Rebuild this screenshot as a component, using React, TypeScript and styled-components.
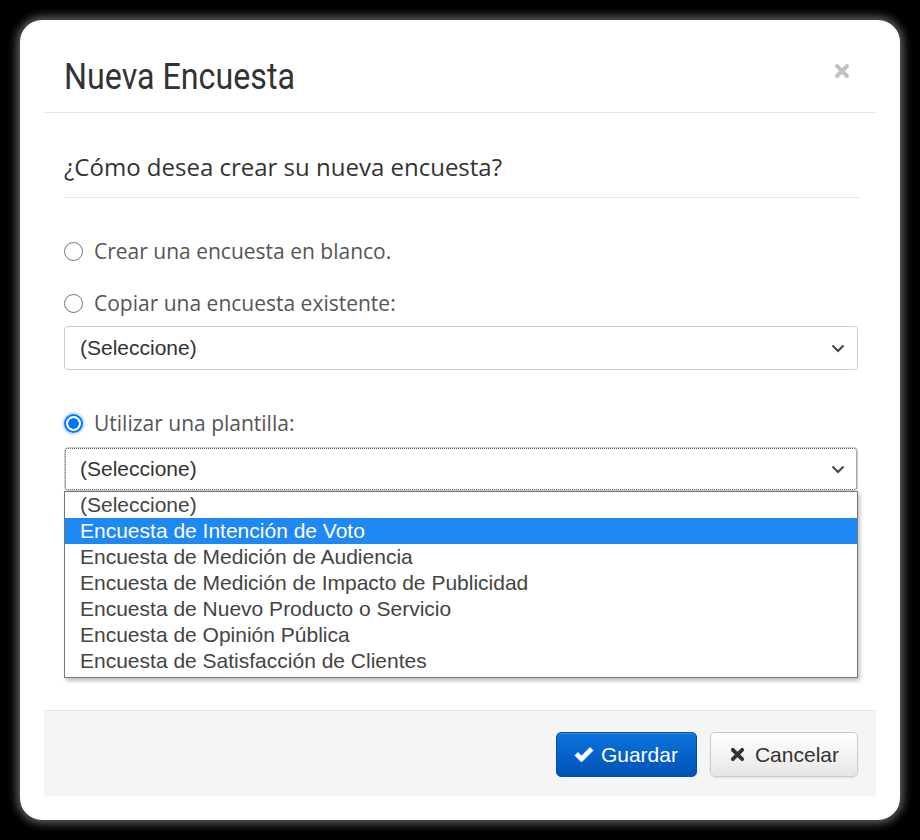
import React from "react";
import styled, { createGlobalStyle } from "styled-components";

const GlobalStyle = createGlobalStyle`
    html, body {
        margin: 0;
        padding: 0;
        background: #000000;
    }
    * {
        box-sizing: border-box;
    }
`;

const Page = styled.div`
    width: 920px;
    height: 840px;
    padding: 20px;
    background: #000000;
`;

const Card = styled.div`
    width: 880px;
    height: 800px;
    background: #ffffff;
    border-radius: 22px;
    box-shadow: 0 0 10px 3px rgba(120, 120, 120, 0.85);
    padding: 0 24px 24px;
    display: flex;
    flex-direction: column;
`;

const Header = styled.div`
    display: flex;
    justify-content: space-between;
    align-items: flex-start;
    height: 93px;
    padding: 37px 26px 0 20px;
    border-bottom: 1px solid #e5e5e5;
`;

const Title = styled.h4`
    margin: 0;
    font-family: Roboto, "Liberation Sans", sans-serif;
    font-weight: 400;
    font-size: 36px;
    line-height: 40px;
    color: #333333;
    transform: scaleX(0.895);
    transform-origin: left center;
`;

const Close = styled.button`
    border: 0;
    background: none;
    padding: 0;
    margin-top: 6px;
    cursor: pointer;
    display: flex;
`;

const Body = styled.div`
    flex: 1;
    padding: 39px 18px 0 20px;
    display: flex;
    flex-direction: column;
`;

const Question = styled.div`
    font-family: "Open Sans", sans-serif;
    font-size: 24px;
    line-height: 30px;
    color: #333333;
    padding-bottom: 15px;
    border-bottom: 1px solid #e5e5e5;
    margin-right: -2px;
`;

const RadioRow = styled.label<{ $gap: number }>`
    display: flex;
    align-items: center;
    gap: 11px;
    height: 28px;
    margin-top: ${(p) => p.$gap}px;
    font-family: "Open Sans", sans-serif;
    font-size: 21px;
    color: #555555;
    cursor: pointer;
`;

const RadioDot = styled.span<{ $checked?: boolean }>`
    width: 19px;
    height: 19px;
    border-radius: 50%;
    flex-shrink: 0;
    border: ${(p) => (p.$checked ? "2px solid #0075ff" : "1px solid #767676")};
    background: ${(p) =>
        p.$checked
            ? "radial-gradient(circle, #0075ff 0 5px, #ffffff 5.5px)"
            : "#ffffff"};
    box-shadow: ${(p) => (p.$checked ? "0 0 0 2px rgba(0, 117, 255, 0.18)" : "none")};
`;

const SelectWrap = styled.div<{ $gap: number }>`
    position: relative;
    margin-top: ${(p) => p.$gap}px;
`;

const SelectBox = styled.div<{ $focused?: boolean }>`
    height: 44px;
    display: flex;
    align-items: center;
    justify-content: space-between;
    padding: 0 12px 0 15px;
    border: 1px solid #cccccc;
    border-radius: 4px;
    outline: ${(p) => (p.$focused ? "1px dotted #555555" : "none")};
    outline-offset: -2px;
    font-family: "Liberation Sans", Arial, sans-serif;
    font-size: 21px;
    color: #333333;
    background: #ffffff;
`;

const OptionList = styled.ul`
    position: absolute;
    top: 100%;
    left: 0;
    right: 0;
    margin: 0;
    padding: 0 0 3px;
    list-style: none;
    background: #ffffff;
    border: 1px solid #767676;
    box-shadow: 2px 3px 4px rgba(0, 0, 0, 0.25);
    z-index: 2;
`;

const Option = styled.li<{ $active?: boolean }>`
    height: 26px;
    line-height: 26px;
    padding-left: 15px;
    font-family: "Liberation Sans", Arial, sans-serif;
    font-size: 21px;
    color: ${(p) => (p.$active ? "#ffffff" : "#444444")};
    background: ${(p) => (p.$active ? "#1e88f5" : "transparent")};
    white-space: nowrap;
`;

const Footer = styled.div`
    height: 86px;
    background: #f5f5f5;
    border-top: 1px solid #e5e5e5;
    display: flex;
    justify-content: flex-end;
    align-items: flex-start;
    gap: 13px;
    padding: 21px 18px 0 0;
`;

const Button = styled.button<{ $primary?: boolean }>`
    height: 45px;
    display: flex;
    align-items: center;
    gap: ${(p) => (p.$primary ? 7 : 10)}px;
    padding: ${(p) => (p.$primary ? "0 18px 0 17px" : "0 18px 0 19px")};
    border-radius: 5px;
    font-family: "Liberation Sans", Arial, sans-serif;
    font-size: 21px;
    cursor: pointer;
    color: ${(p) => (p.$primary ? "#ffffff" : "#333333")};
    border: 1px solid ${(p) => (p.$primary ? "#0051ad" : "#cccccc")};
    background: ${(p) =>
        p.$primary
            ? "linear-gradient(#0b74dd, #0052b6)"
            : "linear-gradient(#ffffff, #e6e6e6)"};
    box-shadow: ${(p) =>
        p.$primary
            ? "inset 0 1px 0 rgba(255,255,255,0.15)"
            : "0 1px 2px rgba(0,0,0,0.08)"};
`;

const Chevron = () => (
    <svg width="14" height="9" viewBox="0 0 14 9">
        <path d="M1.5 1.5 L7 7 L12.5 1.5" fill="none" stroke="#444" strokeWidth="2" />
    </svg>
);

const CheckIcon = () => (
    <svg width="20" height="17" viewBox="0 0 20 17">
        <path
            d="M1 9.5 L4 6.5 L7.5 10 L16 1.5 L19 4.5 L7.5 16 Z"
            fill="#ffffff"
            stroke="#ffffff"
            strokeWidth="0.8"
            strokeLinejoin="round"
        />
    </svg>
);

const TimesIcon = ({ color, size }: { color: string; size: number }) => (
    <svg width={size} height={size} viewBox="0 0 16 16">
        <path
            d="M3 3 L13 13 M13 3 L3 13"
            stroke={color}
            strokeWidth="4"
            strokeLinecap="round"
        />
    </svg>
);

const plantillas = [
    "(Seleccione)",
    "Encuesta de Intención de Voto",
    "Encuesta de Medición de Audiencia",
    "Encuesta de Medición de Impacto de Publicidad",
    "Encuesta de Nuevo Producto o Servicio",
    "Encuesta de Opinión Pública",
    "Encuesta de Satisfacción de Clientes",
];

const App = () => {
    return (
        <Page>
            <GlobalStyle />
            <Card>
                <Header>
                    <Title>Nueva Encuesta</Title>
                    <Close aria-label="Cerrar">
                        <TimesIcon color="#c2c2c2" size={16} />
                    </Close>
                </Header>
                <Body>
                    <Question>¿Cómo desea crear su nueva encuesta?</Question>
                    <RadioRow $gap={39}>
                        <RadioDot />
                        Crear una encuesta en blanco.
                    </RadioRow>
                    <RadioRow $gap={24}>
                        <RadioDot />
                        Copiar una encuesta existente:
                    </RadioRow>
                    <SelectWrap $gap={9}>
                        <SelectBox>
                            (Seleccione)
                            <Chevron />
                        </SelectBox>
                    </SelectWrap>
                    <RadioRow $gap={39}>
                        <RadioDot $checked />
                        Utilizar una plantilla:
                    </RadioRow>
                    <SelectWrap $gap={10}>
                        <SelectBox $focused>
                            (Seleccione)
                            <Chevron />
                        </SelectBox>
                        <OptionList>
                            {plantillas.map((p, i) => (
                                <Option key={p} $active={i === 1}>
                                    {p}
                                </Option>
                            ))}
                        </OptionList>
                    </SelectWrap>
                </Body>
                <Footer>
                    <Button $primary>
                        <CheckIcon />
                        Guardar
                    </Button>
                    <Button>
                        <TimesIcon color="#333333" size={15} />
                        Cancelar
                    </Button>
                </Footer>
            </Card>
        </Page>
    );
};

export default App;
